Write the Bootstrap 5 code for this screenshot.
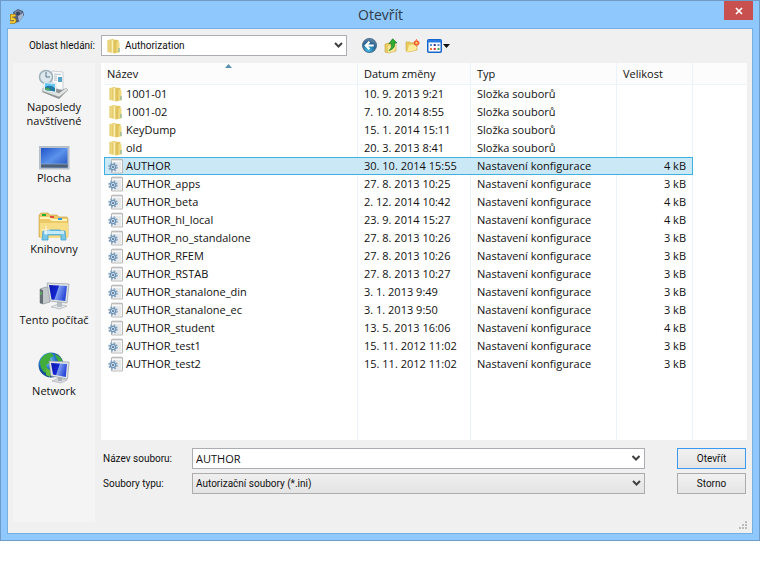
<!DOCTYPE html>
<html lang="cs">
<head>
<meta charset="utf-8">
<meta name="viewport" content="width=device-width, initial-scale=1">
<title>Otevřít</title>
<link rel="stylesheet" href="https://cdn.jsdelivr.net/npm/bootstrap@5.3.0/dist/css/bootstrap.min.css">
<style>
body { background: #fff; color: #111; font: 11px/14px "Open Sans", "Noto Sans", sans-serif; }
svg { display: block; flex: none; }
.dialog-window { background: #8ec8fc; border: 1px solid #6e9cc6; padding: 0 6px 6px; }
.title-bar { height: 27px; padding-left: 2px; }
.title-bar h1 { font-size: 14px; line-height: 20px; font-weight: 400; color: #2f3b48; padding-left: 12px; }
.close-btn { width: 29px; height: 19px; background: #c8504f; border: 0; border-radius: 0; }
.dialog-body { background: #f0f0f0; border: 1px solid #76afe0; padding: 6px 5px 0; }
.ui-label { font: 10px/14px Roboto, "Liberation Sans", sans-serif; }
.look-row { margin-bottom: 7px; }
.look-label { width: 88px; padding-right: 6px; text-align: right; white-space: nowrap; }
.field-box { background: #fff; border: 1px solid #abadb3; height: 21px; }
.field-box.flat-grey { background: linear-gradient(#efefef, #e4e4e4); border-color: #acacac; }
.look-box { flex: 0 1 246px; padding-left: 4px; }
.field-box select, .field-box input { border: 0; background-color: transparent; color: #111; padding: 0 3px; height: 19px; min-width: 0; outline: 0; border-radius: 0; }
.field-box select { appearance: none; padding-right: 16px; background: url("data:image/svg+xml,%3Csvg xmlns='http://www.w3.org/2000/svg' width='9' height='7'%3E%3Cpath d='M1 1l3.500 3.500L8 1' fill='none' stroke='%23404040' stroke-width='2'/%3E%3C/svg%3E") no-repeat right 3px center; }
.field-box .plain-font { font: 11px/14px "Open Sans", "Noto Sans", sans-serif; }
.tool-set { gap: 7px; padding-left: 15px; }
.tool-btn { border: 0; background: none; padding: 0; }
.places { width: 82px; background: #f4f4f4; margin-right: 6px; padding-top: 5px; }
.places a { min-height: 71px; color: #111; text-decoration: none; text-align: center; }
.list-side { padding-bottom: 28px; }
.file-pane { background: #fff; min-height: 377px; padding-left: 3px; }
.file-table { width: 100%; height: 377px; table-layout: fixed; border-collapse: separate; border-spacing: 0; }
.file-table th { height: 22px; font-weight: 400; background: #fcfcfc; border-bottom: 1px solid #edf4fb; padding: 0 6px; position: relative; }
.file-table th:first-child { padding-left: 3px; }
.file-table th, .file-table td { border-right: 1px solid #eaf3fc; white-space: nowrap; }
.file-table th:last-child, .file-table td:last-child { border-right: 0; }
.file-table td { height: 18px; padding: 0 6px; }
.file-table td:first-child { padding-left: 4px; }
.file-name { gap: 2px; }
.file-table .chosen td:not(:last-child) { background: #cbe8f6; border: solid #3fb0e2; border-width: 1px 0; }
.file-table .chosen td:first-child { border-left-width: 1px; padding-left: 3px; }
.file-table .chosen td:nth-child(4) { border-right-width: 1px; }
.file-table .filler td { height: auto; }
.sort-mark { position: absolute; top: 1px; left: 48%; }
.form-line { padding: 0 1px 0 2px; }
.form-line label { width: 89px; }
.dlg-btn { width: 69px; height: 21px; margin-left: 32px; padding: 0; border: 1px solid #acacac; border-radius: 0; background: linear-gradient(#f1f1f1, #e5e5e5); color: #111; }
.dlg-btn.main-action { border-color: #3c99f2; }
.grip-row { height: 11px; }
</style>
</head>
<body>
<svg width="0" height="0" class="position-absolute" aria-hidden="true">
<defs>
<linearGradient id="gFold" x2="1"><stop offset="0" stop-color="#f7e79b"/><stop offset="1" stop-color="#d8b647"/></linearGradient>
<linearGradient id="gScr" x2="1" y2="1"><stop offset="0" stop-color="#1c4ec4"/><stop offset=".5" stop-color="#5b93ec"/><stop offset="1" stop-color="#1d49b4"/></linearGradient>
<linearGradient id="gMon" x2="1" y2=".3"><stop offset="0" stop-color="#0a16a8"/><stop offset=".5" stop-color="#1426d0"/><stop offset=".55" stop-color="#7f9df0"/><stop offset="1" stop-color="#2a48d8"/></linearGradient>
<radialGradient id="gBall" cx=".4" cy=".85" r=".9"><stop offset="0" stop-color="#3dc0f0"/><stop offset=".6" stop-color="#24618f"/><stop offset="1" stop-color="#7b93aa"/></radialGradient>
<radialGradient id="gEarth" cx=".35" cy=".3"><stop offset="0" stop-color="#a7dcff"/><stop offset=".6" stop-color="#2b7fd0"/><stop offset="1" stop-color="#124a96"/></radialGradient>
<symbol id="folder" viewBox="0 0 16 16"><path d="M1.500 2L7 1v14l-5.500-1z" fill="url(#gFold)"/><path d="M7 1.500L12.500 2v12L7 15z" fill="#e5ca68"/><path d="M5.500 1.500l2 1v13l-2-.8z" fill="#faf0b4"/><path d="M7.500 2.500l3-.5v13l-3 .5z" fill="#dfc25b"/><path d="M10.500 4l3 .5v10l-3 .5z" fill="#efda80"/><path d="M13 10v4" stroke="#6fa8a0"/><path d="M2 2v12" stroke="#d9be5c" stroke-width=".7"/></symbol>
<symbol id="ini" viewBox="0 0 16 16"><path d="M3.500 1.500h11v13.500h-11z" fill="#f8f8f8" stroke="#b9b9b9"/><path d="M5 0v3M7 0v3M9 0v3M11 0v3M13 0v3" stroke="#c4c4c4" stroke-width=".8"/><path d="M6 5h7M8 7h5M9 9h4M8 11h5M7 13h6" stroke="#d6d9dc"/><circle cx="5" cy="9" r="4" fill="none" stroke="#86a6c2" stroke-width="1.500" stroke-dasharray="1.800 1.340"/><circle cx="5" cy="9" r="2.600" fill="#dceaf5" stroke="#6d93b5" stroke-width="1.400"/><circle cx="5" cy="9" r="1" fill="#46698c"/></symbol>
</defs>
</svg>
<main class="dialog-window">
<header class="title-bar d-flex align-items-start">
<svg width="16" height="16" viewBox="0 0 16 16" class="mt-2" aria-hidden="true"><path d="M4 3l5-3 5 2 1 4-5 7-5 1z" fill="#53617d"/><path d="M5 3l4-2 4 2-4 4z" fill="#7889a6"/><path d="M9 7l5-3v3l-4 6z" fill="#a9b7d0"/><circle cx="9" cy="4.500" r="2" fill="#38445e"/><path d="M6.500 6.500H2.500V10H4.500q1.500.2 1.500 1.700T4.500 13.200H1" fill="none" stroke="#85651a" stroke-width="3"/><path d="M6.500 6.500H2.500V10H4.500q1.500.2 1.500 1.700T4.500 13.200H1" fill="none" stroke="#f4cb32" stroke-width="1.900"/></svg>
<h1 class="flex-grow-1 text-center mb-0 mt-1">Otevřít</h1>
<button type="button" class="close-btn d-flex align-items-center justify-content-center" aria-label="Zavřít"><svg width="8" height="8" viewBox="0 0 8 8"><path d="M1 1l6 6M7 1L1 7" stroke="#fff" stroke-width="1.700"/></svg></button>
</header>
<div class="dialog-body">
<div class="look-row d-flex align-items-center">
<label class="ui-label look-label" for="lookIn">Oblast hledání:</label>
<div class="field-box look-box d-flex align-items-center">
<svg width="16" height="16" aria-hidden="true"><use href="#folder"/></svg>
<select id="lookIn" class="ui-label flex-grow-1"><option>Authorization</option></select>
</div>
<div class="tool-set d-flex align-items-center">
<button type="button" class="tool-btn" aria-label="Zpět"><svg width="15" height="15" viewBox="0 0 14 14"><circle cx="7" cy="7" r="6.500" fill="url(#gBall)" stroke="#4f7293"/><path d="M11 7H4M7 3.500L3.500 7 7 10.500" fill="none" stroke="#fff" stroke-width="2"/></svg></button>
<button type="button" class="tool-btn" aria-label="O úroveň výš"><svg width="14" height="16" viewBox="0 0 14 16"><path d="M1 6l4-1 1 1h6v7l-7 2-4-1z" fill="#e8cb62" stroke="#c5a340" stroke-width=".6"/><path d="M4 8l8-2-1 7-7 2z" fill="#fae998"/><path d="M5 12.500Q8 11 7.600 5.500H5L8.700.8 13 5h-2.500q.8 6-5.500 7.500z" fill="#32ad31" stroke="#167a22" stroke-width=".7"/></svg></button>
<button type="button" class="tool-btn" aria-label="Nová složka"><svg width="15" height="14" viewBox="0 0 15 14"><path d="M1 3h4l1 1h6v7L3 13l-2-1z" fill="#e9c95d" stroke="#cfa845" stroke-width=".6"/><path d="M4 6l9-1-2 6-9 2z" fill="#fcea9d"/><circle cx="11.500" cy="4" r="1.900" fill="#ffd36a" stroke="#ed5a2e" stroke-width="1.500"/><path d="M11.500 0v2M11.500 6v2M7.500 4h2M13.500 4h1.500" stroke="#f4854d"/></svg></button>
<button type="button" class="tool-btn d-flex align-items-center" aria-label="Zobrazení"><svg width="23" height="14" viewBox="0 0 23 14"><rect x=".75" y=".75" width="13.500" height="12.500" rx="1" fill="#fff" stroke="#1765cb" stroke-width="1.500"/><path d="M1 1h13v2.500H1z" fill="#2b7ce0"/><path d="M3 5h2v2H3zM10.500 5h2v2h-2z" fill="#5b91cd"/><path d="M6.700 5h2v2h-2z" fill="#263a87"/><path d="M3 9h2v2H3z" fill="#e77637"/><path d="M6.700 9h2v2h-2z" fill="#ca2744"/><path d="M10.500 9h2v2h-2z" fill="#48a248"/><path d="M16 5h7l-3.500 4z" fill="#111"/></svg></button>
</div>
</div>
<div class="d-flex">
<nav class="places flex-shrink-0" aria-label="Místa">
<a href="#recent" class="d-flex flex-column align-items-center"><svg width="32" height="32" viewBox="0 0 32 32"><path d="M4 24l6-7 20 5-9 9z" fill="#8d9292"/><path d="M4 23l17 6 9-7-2-2-7 5-16-5z" fill="#e1e4e3" stroke="#969b9b" stroke-width=".5"/><path d="M14 3l11 1v18l-11-2z" fill="#fcfcfc" stroke="#b8c0c5" stroke-width=".7"/><path d="M16 6l7 .5M16 8l3 .3M16 10l3 .3M16 12l3 .3" stroke="#9eafb9" stroke-width=".8"/><path d="M20 9h4v5h-4z" fill="#54a3c8"/><circle cx="8" cy="9" r="6.500" fill="#dce8ee" stroke="#9fb0ba" stroke-width="1.500"/><path d="M8 4v5h4" fill="none" stroke="#557486"/><path d="M6 14l12 1v10L6 23z" fill="#f7fbfd" stroke="#bac8cf" stroke-width=".5"/><path d="M7 15l10 1v7.500L7 22z" fill="#67c5f1"/><path d="M7 19q5-3 10 1v3.500L7 22z" fill="#247ba5"/><path d="M7 20.500q4-2 6 2L7 22z" fill="#4ca45c"/></svg><span>Naposledy<br>navštívené</span></a>
<a href="#desktop" class="d-flex flex-column align-items-center"><svg width="32" height="32" viewBox="0 0 32 32"><path d="M2 8h28.500v21.500H2z" fill="url(#gScr)" stroke="#b8bfc9" stroke-width="2"/><path d="M3 25h26.500v3.500H3z" fill="#4e6075"/><path d="M3 25h26.500" stroke="#8dafd3" stroke-width=".7"/></svg><span>Plocha</span></a>
<a href="#libraries" class="d-flex flex-column align-items-center"><svg width="32" height="32" viewBox="0 0 32 32"><path d="M1 5l2-2h7l2 2h7l2 2h8l1 2v18H1z" fill="#ecca69" stroke="#c8a74d" stroke-width=".7"/><path d="M2 8h10l2 2h15" fill="none" stroke="#fff4bc" stroke-width="2"/><path d="M2 13h28v15H2z" fill="#f8dd87"/><path d="M4 4h4v2H4z" fill="#22ae35"/><path d="M12 6h4v2h-4z" fill="#e15043"/><path d="M20 8h4v2h-4z" fill="#3299df"/><path d="M5 21h4l1-1h12l1 1h4l1 9h-5v-5H10v5H4z" fill="#79c6e5" stroke="#48a2cd" stroke-width=".8"/><path d="M6 21h20v3H6z" fill="#c3eafa"/><path d="M8 16v9M4 20h8" stroke="#fff" stroke-width=".8"/></svg><span>Knihovny</span></a>
<a href="#computer" class="d-flex flex-column align-items-center"><svg width="32" height="32" viewBox="0 0 32 32"><path d="M2 8l6-2 4 1v14l-7 2-3-1z" fill="#c2c8ca" stroke="#80888d" stroke-width=".6"/><path d="M2 8l3 1v14l-3-1z" fill="#676f76"/><path d="M3 11v3" stroke="#4dd74d"/><path d="M13 26l7-3 9 2-7 3z" fill="#e4e7e9" stroke="#a4aaaf" stroke-width=".6"/><path d="M19 21h5v5h-5z" fill="#b9c0c5"/><path d="M9 2l22 1-2 19-17-2z" fill="#dfe3e6" stroke="#969da4" stroke-width=".7"/><path d="M11 4l18 1-1.700 15L13.500 18.500z" fill="url(#gMon)"/></svg><span>Tento počítač</span></a>
<a href="#network" class="d-flex flex-column align-items-center"><svg width="32" height="32" viewBox="0 0 32 32"><circle cx="13" cy="13" r="12.500" fill="url(#gEarth)"/><path d="M2 9q4-8 11-8l3 3-4 2 1 4-5 3 2 5-3 3q-5-4-5-12zM17 2q7 3 8 9l-5-2-2-4z" fill="#43ad3b"/><path d="M8 16l6 3-2 6-4-2z" fill="#61bc3d"/><path d="M14 29l7-3 8 2-6 3z" fill="#d8dcde" stroke="#a4aaaf" stroke-width=".6"/><path d="M20 24h4v5h-4z" fill="#aab1b6"/><path d="M11 9l20 1-1.500 17L13 24z" fill="#dfe3e6" stroke="#969da4" stroke-width=".7"/><path d="M13 11l16 1-1.200 13L15 22.500z" fill="url(#gMon)"/></svg><span>Network</span></a>
</nav>
<section class="list-side flex-grow-1">
<div class="file-pane">
<table class="file-table">
<colgroup><col><col style="width:113px"><col style="width:146px"><col style="width:76px"><col style="width:54px"></colgroup>
<thead><tr><th scope="col">Název<svg class="sort-mark" width="7" height="4" viewBox="0 0 7 4"><path d="M0 4l3.500-4L7 4z" fill="#5b8fae"/></svg></th><th scope="col">Datum změny</th><th scope="col">Typ</th><th scope="col">Velikost</th><th></th></tr></thead>
<tbody id="files"></tbody>
</table>
</div>
<div class="form-line d-flex align-items-center mt-2">
<label for="fileName" class="ui-label">Název souboru:</label>
<div class="field-box flex-grow-1 d-flex align-items-center"><input id="fileName" class="plain-font flex-grow-1" type="text" value="AUTHOR"><button type="button" class="tool-btn pe-1" aria-label="Historie"><svg width="8" height="7" viewBox="0 0 8 7"><path d="M.5 1L4 4.500 7.500 1" fill="none" stroke="#404040" stroke-width="2"/></svg></button></div>
<button type="button" class="dlg-btn main-action ui-label">Otevřít</button>
</div>
<div class="form-line d-flex align-items-center mt-1">
<label for="fileType" class="ui-label">Soubory typu:</label>
<div class="field-box flat-grey flex-grow-1 d-flex"><select id="fileType" class="ui-label flex-grow-1"><option>Autorizační soubory (*.ini)</option></select></div>
<button type="button" class="dlg-btn ui-label">Storno</button>
</div>
</section>
</div>
<div class="grip-row d-flex align-items-end justify-content-end pb-1"><svg width="8" height="8" viewBox="0 0 8 8" aria-hidden="true"><path d="M6 0h2v2H6zM3 3h2v2H3zM6 3h2v2H6zM0 6h2v2H0zM3 6h2v2H3zM6 6h2v2H6z" fill="#bcbcbc"/></svg></div>
</div>
</main>
<script src="https://cdn.jsdelivr.net/npm/bootstrap@5.3.0/dist/js/bootstrap.bundle.min.js"></script>
<script>
const files = [
["1001-01","10. 9. 2013 9:21"],["1001-02","7. 10. 2014 8:55"],["KeyDump","15. 1. 2014 15:11"],["old","20. 3. 2013 8:41"],
["AUTHOR","30. 10. 2014 15:55",4],["AUTHOR_apps","27. 8. 2013 10:25",3],["AUTHOR_beta","2. 12. 2014 10:42",4],["AUTHOR_hl_local","23. 9. 2014 15:27",4],
["AUTHOR_no_standalone","27. 8. 2013 10:26",3],["AUTHOR_RFEM","27. 8. 2013 10:26",3],["AUTHOR_RSTAB","27. 8. 2013 10:27",3],["AUTHOR_stanalone_din","3. 1. 2013 9:49",3],
["AUTHOR_stanalone_ec","3. 1. 2013 9:50",3],["AUTHOR_student","13. 5. 2013 16:06",4],["AUTHOR_test1","15. 11. 2012 11:02",3],["AUTHOR_test2","15. 11. 2012 11:02",3]];
document.getElementById("files").innerHTML = files.map(([name, date, size]) =>
`<tr class="${name === "AUTHOR" ? "chosen" : ""}"><td><span class="file-name d-flex align-items-center"><svg width="16" height="16" aria-hidden="true"><use href="#${size ? "ini" : "folder"}"/></svg><span>${name}</span></span></td><td>${date}</td><td>${size ? "Nastavení konfigurace" : "Složka souborů"}</td><td class="text-end">${size ? size + " kB" : ""}</td><td></td></tr>`).join("") +
`<tr class="filler"><td></td><td></td><td></td><td></td><td></td></tr>`;
</script>
</body>
</html>
